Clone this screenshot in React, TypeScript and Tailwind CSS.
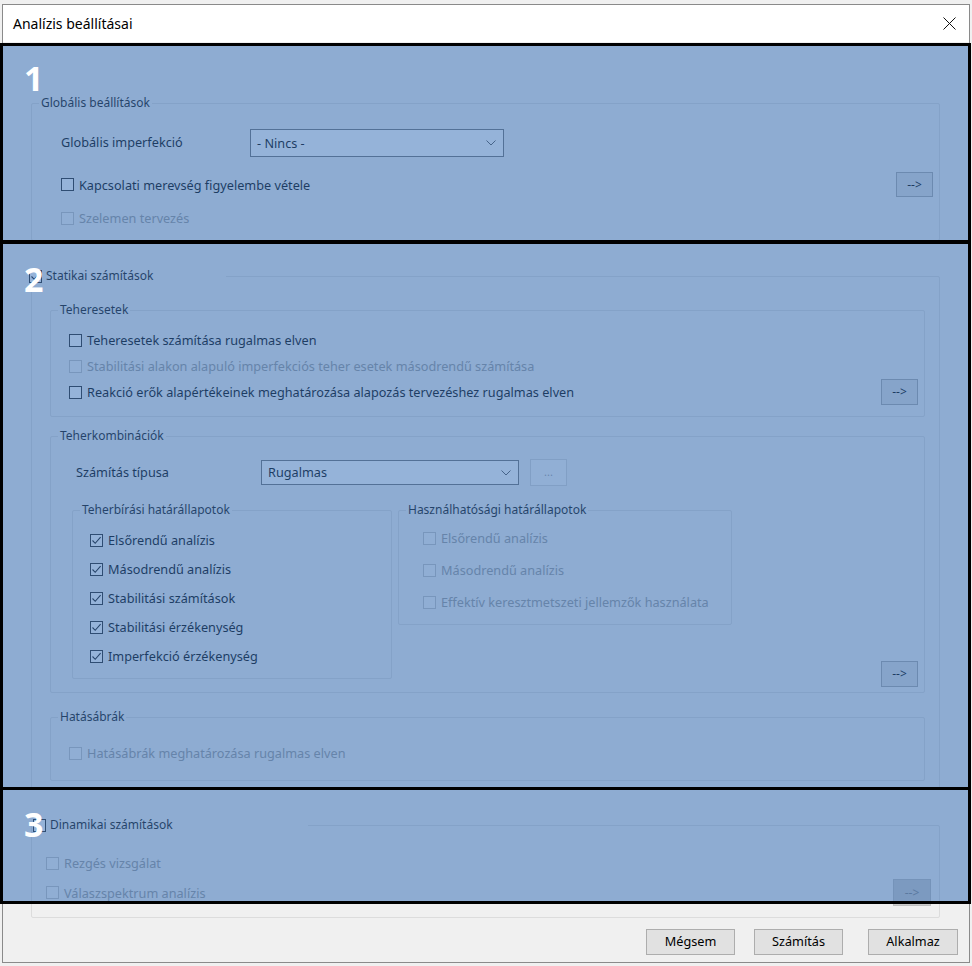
import React from "react";

type CheckProps = {
  label: string;
  checked?: boolean;
  disabled?: boolean;
  gap?: string;
};

function CheckBox({ label, checked, disabled, gap = "ml-[5px]" }: CheckProps) {
  return (
    <div className="flex items-center h-[18px] whitespace-nowrap">
      <span
        className={`w-[13px] h-[13px] shrink-0 border flex items-center justify-center ${
          disabled ? "border-[#c4c4c4] bg-[#f4f4f4]" : "border-[#333333] bg-white"
        }`}
      >
        {checked && (
          <svg width="11" height="11" viewBox="0 0 11 11">
            <polyline points="1.5,5.5 4.2,8.3 9.6,2.2" fill="none" stroke="#222" strokeWidth="1.1" />
          </svg>
        )}
      </span>
      <span className={`${gap} text-[12.7px] leading-[18px] ${disabled ? "text-[#a0a0a0]" : "text-[#111111]"}`}>
        {label}
      </span>
    </div>
  );
}

function Group({
  title,
  className,
  children,
}: {
  title: React.ReactNode;
  className: string;
  children: React.ReactNode;
}) {
  return (
    <fieldset className={`border border-[#dcdcdc] rounded-[2px] ${className}`}>
      <legend className="ml-[7px] px-[2px] text-[12px] leading-[16px] text-[#1e1e1e]">{title}</legend>
      {children}
    </fieldset>
  );
}

function CheckGroup({
  title,
  checked,
  legend,
  className,
  children,
}: {
  title: string;
  checked?: boolean;
  legend: string;
  className: string;
  children: React.ReactNode;
}) {
  return (
    <fieldset className={`border border-[#dcdcdc] rounded-[2px] ${className}`}>
      <legend className={`h-[18px] flex items-center ${legend}`}>
        <span className="w-[13px] h-[13px] border border-[#333333] bg-white flex items-center justify-center">
          {checked && (
            <svg width="11" height="11" viewBox="0 0 11 11">
              <polyline points="1.5,5.5 4.2,8.3 9.6,2.2" fill="none" stroke="#222" strokeWidth="1.1" />
            </svg>
          )}
        </span>
        <span className="ml-[4px] text-[12px] leading-[18px] text-[#1e1e1e]">{title}</span>
      </legend>
      {children}
    </fieldset>
  );
}

function ArrowButton({ disabled, size = "w-[37px] h-[26px]" }: { disabled?: boolean; size?: string }) {
  return (
    <button
      className={`${size} shrink-0 border text-[12px] leading-none flex items-center justify-center ${
        disabled ? "bg-[#cccccc] border-[#bfbfbf] text-[#8a8a8a]" : "bg-[#e1e1e1] border-[#adadad] text-[#111111]"
      }`}
    >
      --&gt;
    </button>
  );
}

function Combo({ value, className }: { value: string; className: string }) {
  return (
    <div className={`border border-[#7a7a7a] bg-white flex items-center justify-between pl-[6px] pr-[7px] ${className}`}>
      <span className="text-[12.7px] leading-none text-[#111111]">{value}</span>
      <svg width="10" height="6" viewBox="0 0 10 6">
        <polyline points="0.5,0.5 5,5 9.5,0.5" fill="none" stroke="#606060" strokeWidth="1" />
      </svg>
    </div>
  );
}

function DialogButton({ label, className = "" }: { label: string; className?: string }) {
  return (
    <button
      className={`w-[89px] h-[26px] bg-[#e1e1e1] border border-[#adadad] text-[12.7px] text-black flex items-center justify-center ${className}`}
    >
      {label}
    </button>
  );
}

export default function App() {
  return (
    <div className="relative w-[972px] h-[966px] overflow-hidden bg-[#f0f0f0] font-['Noto_Sans',sans-serif]">
      <div className="ml-[2px] mt-[4px] w-[968px] h-[959px] border border-[#8a8a8a] flex flex-col bg-[#f0f0f0]">
        {/* title bar */}
        <div className="h-[37px] bg-white flex items-center justify-between pl-[10px] pr-[13px] shrink-0">
          <span className="text-[14px] text-black">Analízis beállításai</span>
          <svg width="13" height="13" viewBox="0 0 13 13">
            <line x1="0.5" y1="0.5" x2="12.5" y2="12.5" stroke="#111" strokeWidth="1" />
            <line x1="12.5" y1="0.5" x2="0.5" y2="12.5" stroke="#111" strokeWidth="1" />
          </svg>
        </div>

        {/* body */}
        <div className="flex-1 flex flex-col pl-[28px]">
          {/* Globális beállítások */}
          <Group title="Globális beállítások" className="mt-[53px] w-[909px]">
            <div className="pl-[29px] pr-[6px] pt-[18px] pb-[13px]">
              <div className="flex items-center h-[28px]">
                <span className="w-[189px] text-[12.7px] text-[#111111]">Globális imperfekció</span>
                <Combo value="- Nincs -" className="w-[254px] h-[28px]" />
              </div>
              <div className="mt-[15px] flex items-center justify-between h-[25px]">
                <CheckBox label="Kapcsolati merevség figyelembe vétele" />
                <ArrowButton size="w-[37px] h-[25px]" />
              </div>
              <div className="mt-[12px]">
                <CheckBox label="Szelemen tervezés" disabled />
              </div>
            </div>
          </Group>

          {/* Statikai számítások */}
          <CheckGroup title="Statikai számítások" checked legend="ml-[-3px] w-[197px]" className="mt-[26px] w-[909px]">
            <div className="pl-[18px] pr-[14px] pt-[17px] pb-[8px] flex flex-col">
              <Group title="Teheresetek" className="w-[875px]">
                <div className="pl-[18px] pr-[6px] pt-[13px] pb-[11px]">
                  <CheckBox label="Teheresetek számítása rugalmas elven" />
                  <div className="mt-[8px]">
                    <CheckBox label="Stabilitási alakon alapuló imperfekciós teher esetek másodrendű számítása" disabled />
                  </div>
                  <div className="mt-[4px] flex items-center justify-between h-[26px]">
                    <CheckBox label="Reakció erők alapértékeinek meghatározása alapozás tervezéshez rugalmas elven" />
                    <ArrowButton />
                  </div>
                </div>
              </Group>

              <Group title="Teherkombinációk" className="mt-[11px] w-[875px]">
                <div className="pl-[21px] pr-[6px] pt-[15px] pb-[5px]">
                  <div className="flex items-center h-[27px]">
                    <span className="ml-[4px] w-[185px] text-[12.7px] text-[#111111]">Számítás típusa</span>
                    <Combo value="Rugalmas" className="w-[258px] h-[25px]" />
                    <button className="ml-[11px] w-[37px] h-[27px] bg-[#f7f7f7] border border-[#d6d6d6] text-[11px] text-[#a8a8a8] flex items-center justify-center">
                      ...
                    </button>
                  </div>
                  <div className="mt-[16px] flex items-start">
                    <Group title="Teherbírási határállapotok" className="w-[320px]">
                      <div className="pl-[17px] pt-[13px] pb-[13px] flex flex-col gap-[11px]">
                        <CheckBox label="Elsőrendű analízis" checked />
                        <CheckBox label="Másodrendű analízis" checked />
                        <CheckBox label="Stabilitási számítások" checked />
                        <CheckBox label="Stabilitási érzékenység" checked />
                        <CheckBox label="Imperfekció érzékenység" checked />
                      </div>
                    </Group>
                    <Group title="Használhatósági határállapotok" className="ml-[6px] w-[334px]">
                      <div className="pl-[24px] pt-[11px] pb-[13px] flex flex-col gap-[14px]">
                        <CheckBox label="Elsőrendű analízis" disabled />
                        <CheckBox label="Másodrendű analízis" disabled />
                        <CheckBox label="Effektív keresztmetszeti jellemzők használata" disabled />
                      </div>
                    </Group>
                    <div className="ml-auto mt-[159px]">
                      <ArrowButton />
                    </div>
                  </div>
                </div>
              </Group>

              <Group title="Hatásábrák" className="mt-[16px] w-[875px]">
                <div className="pl-[18px] pt-[19px] pb-[18px]">
                  <CheckBox label="Hatásábrák meghatározása rugalmas elven" disabled />
                </div>
              </Group>
            </div>
          </CheckGroup>

          {/* Dinamikai számítások */}
          <CheckGroup title="Dinamikai számítások" legend="ml-[1px] w-[275px]" className="mt-[26px] w-[909px]">
            <div className="pl-[14px] pr-[8px] pt-[20px] pb-[11px]">
              <CheckBox label="Rezgés vizsgálat" disabled />
              <div className="mt-[7px] flex items-center justify-between h-[27px]">
                <CheckBox label="Válaszspektrum analízis" disabled />
                <ArrowButton disabled size="w-[38px] h-[27px]" />
              </div>
            </div>
          </CheckGroup>

          {/* dialog buttons */}
          <div className="mt-[11px] flex justify-end pr-[11px]">
            <DialogButton label="Mégsem" className="mr-[19px]" />
            <DialogButton label="Számítás" className="mr-[25px]" />
            <DialogButton label="Alkalmaz" className="w-[90px]" />
          </div>
        </div>
      </div>

      {/* highlighted regions */}
      <div className="absolute left-0 top-[43px] w-[971px] h-[200px] border-[3px] border-black bg-[rgba(44,104,180,0.5)]">
        <span className="absolute left-[21px] top-[15px] text-[34px] leading-none font-bold text-white font-['Open_Sans',sans-serif]">
          1
        </span>
      </div>
      <div className="absolute left-0 top-[241px] w-[971px] h-[549px] border-[3px] border-black bg-[rgba(44,104,180,0.5)]">
        <span className="absolute left-[21px] top-[18px] text-[34px] leading-none font-bold text-white font-['Open_Sans',sans-serif]">
          2
        </span>
      </div>
      <div className="absolute left-0 top-[787px] w-[971px] h-[117px] border-[3px] border-black bg-[rgba(44,104,180,0.5)]">
        <span className="absolute left-[21px] top-[17px] text-[34px] leading-none font-bold text-white font-['Open_Sans',sans-serif]">
          3
        </span>
      </div>
    </div>
  );
}
